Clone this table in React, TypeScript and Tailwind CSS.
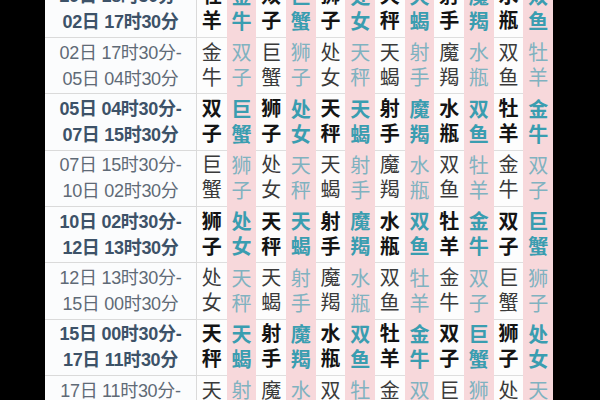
import React from "react";

const SIGNS = [
  "牡羊",
  "金牛",
  "双子",
  "巨蟹",
  "狮子",
  "处女",
  "天秤",
  "天蝎",
  "射手",
  "魔羯",
  "水瓶",
  "双鱼",
];

const RANGES: [string, string][] = [
  ["29日 18时30分-", "02日 17时30分"],
  ["02日 17时30分-", "05日 04时30分"],
  ["05日 04时30分-", "07日 15时30分"],
  ["07日 15时30分-", "10日 02时30分"],
  ["10日 02时30分-", "12日 13时30分"],
  ["12日 13时30分-", "15日 00时30分"],
  ["15日 00时30分-", "17日 11时30分"],
  ["17日 11时30分-", "19日 22时30分"],
];

const cjk = "font-['Liberation_Sans','Noto_Sans_CJK_SC',sans-serif]";

function SignCell({ name, pink, bold }: { name: string; pink: boolean; bold: boolean }) {
  const tone = pink
    ? bold
      ? "bg-[#f7d8db] text-[#3a9db0] font-bold"
      : "bg-[#f7d8db] text-[#80b2c0] font-normal"
    : bold
      ? "bg-[#fdfdfd] text-[#141414] font-bold border-b border-[#dedede]"
      : "bg-[#fdfdfd] text-[#3a3a3a] font-normal border-b border-[#dedede]";
  return (
    <div
      className={`flex flex-col items-center justify-center text-[20px] leading-[25px] ${cjk} ${tone}`}
    >
      <span>{name[0]}</span>
      <span>{name[1]}</span>
    </div>
  );
}

export default function App() {
  return (
    <div className="w-[600px] h-[400px] bg-black overflow-hidden flex">
      <div className="w-[45px] shrink-0" />
      <div className="w-[508px] shrink-0 -mt-[18.3px]">
        {RANGES.map(([from, to], i) => {
          const bold = i % 2 === 0;
          return (
            <div
              key={from}
              className="grid grid-cols-[152px_repeat(12,minmax(0,1fr))] h-[56.33px]"
            >
              <div
                className={`flex flex-col items-center justify-center bg-[#fbfcfd] border-b border-r border-[#dadada] text-[18px] leading-[26px] tracking-[-0.3px] ${cjk} ${
                  bold ? "font-bold text-[#3d5268]" : "font-normal text-[#5f6a76]"
                }`}
              >
                <span className="whitespace-pre">{from}</span>
                <span className="whitespace-pre">{to}</span>
              </div>
              {SIGNS.map((_, j) => (
                <SignCell
                  key={j}
                  name={SIGNS[(i + j) % 12]}
                  pink={j % 2 === 1}
                  bold={bold}
                />
              ))}
            </div>
          );
        })}
      </div>
    </div>
  );
}
